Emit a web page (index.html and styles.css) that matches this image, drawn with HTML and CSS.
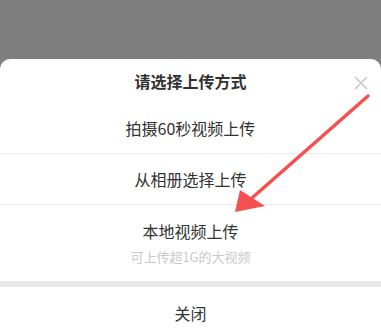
FILE: index.html
```html
<!DOCTYPE html>
<html lang="zh">
<head>
<meta charset="utf-8">
<link rel="stylesheet" href="styles.css">
</head>
<body>
<div class="sheet">
  <div class="header">
    <span class="title">请选择上传方式</span>
    <svg class="close" viewBox="0 0 14 14" width="14" height="14"><path d="M1 1L13 13M13 1L1 13" stroke="#c8c9cc" stroke-width="1.6" fill="none"/></svg>
  </div>
  <div class="item">拍摄60秒视频上传</div>
  <div class="item">从相册选择上传</div>
  <div class="item tall">
    <span>本地视频上传</span>
    <span class="sub">可上传超1G的大视频</span>
  </div>
  <div class="gap"></div>
  <div class="item cancel">关闭</div>
</div>
<svg class="arrow" viewBox="0 0 381 329" width="381" height="329">
  <line x1="368" y1="96" x2="252" y2="198" stroke="#f5504f" stroke-width="3.5" stroke-linecap="round"/>
  <polygon points="235,212 240,190 265,206" fill="#f5504f"/>
</svg>
</body>
</html>
```
FILE: styles.css
```css
html, body {
  margin: 0;
  padding: 0;
}
body {
  width: 381px;
  height: 329px;
  overflow: hidden;
  background: #7f7f7f;
  font-family: "Noto Sans CJK SC", "Noto Sans", sans-serif;
  color: #323233;
  position: relative;
}
.sheet {
  margin-top: 59px;
  background: #fff;
  border-radius: 10px 10px 0 0;
  display: flex;
  flex-direction: column;
}
.header {
  height: 44px;
  display: flex;
  align-items: center;
  justify-content: center;
  position: relative;
}
.title {
  font-size: 16px;
  font-weight: 700;
  line-height: 20px;
}
.close {
  position: absolute;
  right: 13px;
  top: 17px;
}
.item {
  height: 50px;
  display: flex;
  flex-direction: column;
  align-items: center;
  justify-content: center;
  font-size: 16px;
  line-height: 22px;
  border-bottom: 1px solid #ebebeb;
}
.item.tall {
  height: 76px;
  border-bottom: none;
  gap: 6px;
}
.sub {
  font-size: 13px;
  line-height: 18px;
  color: #c8c9cc;
}
.gap {
  height: 6px;
  background: #e9e9eb;
}
.cancel {
  border-bottom: none;
  height: 52px;
}
.arrow {
  position: absolute;
  left: 0;
  top: 0;
}
```
